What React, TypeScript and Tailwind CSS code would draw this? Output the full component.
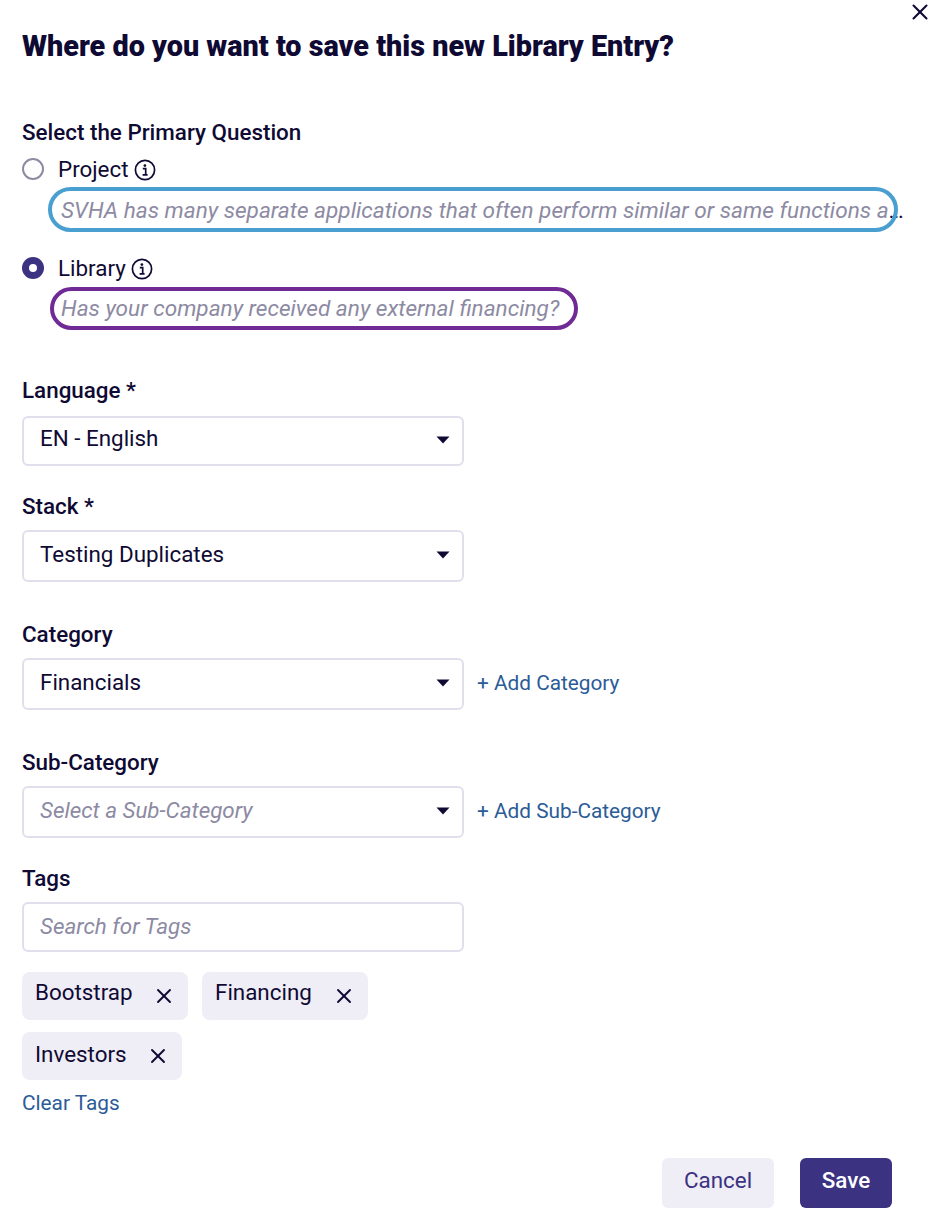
import { X } from 'lucide-react'

const ink = 'text-[#0f0a33]'

function InfoIcon() {
  return (
    <svg width="22" height="22" viewBox="0 0 22 22" fill="none" stroke="#0f0a33" className="ml-[5px] -mt-[1px]">
      <circle cx="11" cy="11" r="9.6" strokeWidth="1.7" />
      <circle cx="10.9" cy="6.6" r="1.35" fill="#0f0a33" stroke="none" />
      <path d="M8.8 9.7h2.9v5.9M8.6 15.9h5" strokeWidth="1.7" />
    </svg>
  )
}

function Caret() {
  return (
    <svg width="14" height="8" viewBox="0 0 14 8" className="absolute right-[12px] top-1/2 -mt-[5px]">
      <path d="M0.5 0.5h13L7 7.5z" fill="#0f0a33" />
    </svg>
  )
}

function Select({ value, height, placeholder }: { value: string; height: string; placeholder?: boolean }) {
  return (
    <div
      className={`relative flex w-[442px] items-center rounded-md border-2 border-[#e0dfec] pl-4 text-[22.4px] ${height} ${
        placeholder ? 'italic text-[#8d8aa3]' : ink
      }`}
    >
      {value}
      <Caret />
    </div>
  )
}

function Chip({ label, width, lift }: { label: string; width: string; lift: string }) {
  return (
    <div className={`flex h-12 items-center justify-between rounded-lg bg-[#efeef6] pl-[13px] pr-3 text-[22.4px] ${ink} ${width}`}>
      <span className={lift}>{label}</span>
      <X size={24} strokeWidth={1.9} />
    </div>
  )
}

function Label({ children, className }: { children: string; className: string }) {
  return <div className={`text-[22.4px] leading-7 font-medium ${ink} ${className}`}>{children}</div>
}

function AddLink({ children }: { children: string }) {
  return <a className="ml-[13px] text-[20.8px] text-[#2b5c97]">{children}</a>
}

export default function App() {
  return (
    <div className="relative h-[1208px] w-[940px] overflow-hidden bg-white pl-[22px] font-['Roboto',sans-serif]">
      <button className={`absolute right-[7px] top-[-1px] ${ink}`}>
        <X size={26} strokeWidth={1.9} />
      </button>

      <h1 className={`pt-[26px] text-[28.8px] leading-10 font-black ${ink}`}>Where do you want to save this new Library Entry?</h1>

      <Label className="mt-[52px]">Select the Primary Question</Label>

      <div className="mt-[10px] flex h-7 items-center">
        <span className="-mt-[2px] h-[22px] w-[22px] rounded-full border-2 border-[#8d8aa3]" />
        <span className={`ml-[14px] text-[22.4px] ${ink}`}>Project</span>
        <InfoIcon />
      </div>
      <div className="relative mt-[3px] h-[45px] w-[876px]">
        <p className="absolute left-[39px] top-[10px] text-[22.6px] leading-7 whitespace-nowrap text-[#8d8aa3] italic">
          SVHA has many separate applications that often perform similar or same functions a<span className="text-[#0f0a33] not-italic">…</span>
        </p>
        <span className="absolute left-[26px] top-0 h-[45px] w-[850px] rounded-[23px] border-4 border-[#4a9fd1]" />
      </div>

      <div className="mt-[23px] flex h-7 items-center">
        <span className="-mt-[2px] flex h-[22px] w-[22px] items-center justify-center rounded-full bg-[#3c3282]">
          <span className="h-2 w-2 rounded-full bg-white" />
        </span>
        <span className={`ml-[14px] text-[22.4px] ${ink}`}>Library</span>
        <InfoIcon />
      </div>
      <div className="relative mt-1 h-[43px] w-[876px]">
        <p className="absolute left-[39px] top-2 text-[22.6px] leading-7 text-[#8d8aa3] italic">
          Has your company received any external financing?
        </p>
        <span className="absolute left-[28px] top-0 h-[43px] w-[528px] rounded-[22px] border-4 border-[#6f2a96]" />
      </div>

      <Label className="mt-[46px]">Language *</Label>
      <div className="mt-3">
        <Select value="EN - English" height="h-[50px] pb-1" />
      </div>

      <Label className="mt-[26px]">Stack *</Label>
      <div className="mt-[10px]">
        <Select value="Testing Duplicates" height="h-[52px] pb-[2px]" />
      </div>

      <Label className="mt-[38px]">Category</Label>
      <div className="mt-[10px] flex items-center">
        <Select value="Financials" height="h-[52px] pb-[2px]" />
        <AddLink>+ Add Category</AddLink>
      </div>

      <Label className="mt-[38px]">Sub-Category</Label>
      <div className="mt-[10px] flex items-center">
        <Select value="Select a Sub-Category" height="h-[52px] pb-[2px]" placeholder />
        <AddLink>+ Add Sub-Category</AddLink>
      </div>

      <Label className="mt-[26px]">Tags</Label>
      <div className="mt-[10px] flex h-[50px] w-[442px] items-center rounded-md border-2 border-[#e0dfec] pl-4 text-[22.4px] text-[#8d8aa3] italic">
        Search for Tags
      </div>

      <div className="mt-5 flex gap-[14px]">
        <Chip label="Bootstrap" width="w-[166px]" lift="-mt-[6px]" />
        <Chip label="Financing" width="w-[166px]" lift="-mt-[6px]" />
      </div>
      <div className="mt-3">
        <Chip label="Investors" width="w-[160px]" lift="-mt-[2px]" />
      </div>
      <a className="mt-[9px] block text-[20.8px] leading-7 text-[#2b5c97]">Clear Tags</a>

      <div className="mt-[41px] flex w-[870px] justify-end gap-[26px] text-[22.4px]">
        <button className="flex h-[50px] w-[112px] items-center justify-center rounded-md bg-[#efeef6] pb-[5px] text-[#3c3282]">Cancel</button>
        <button className="flex h-[50px] w-[92px] items-center justify-center rounded-md bg-[#3c3282] pb-[5px] font-medium text-white">Save</button>
      </div>
    </div>
  )
}
